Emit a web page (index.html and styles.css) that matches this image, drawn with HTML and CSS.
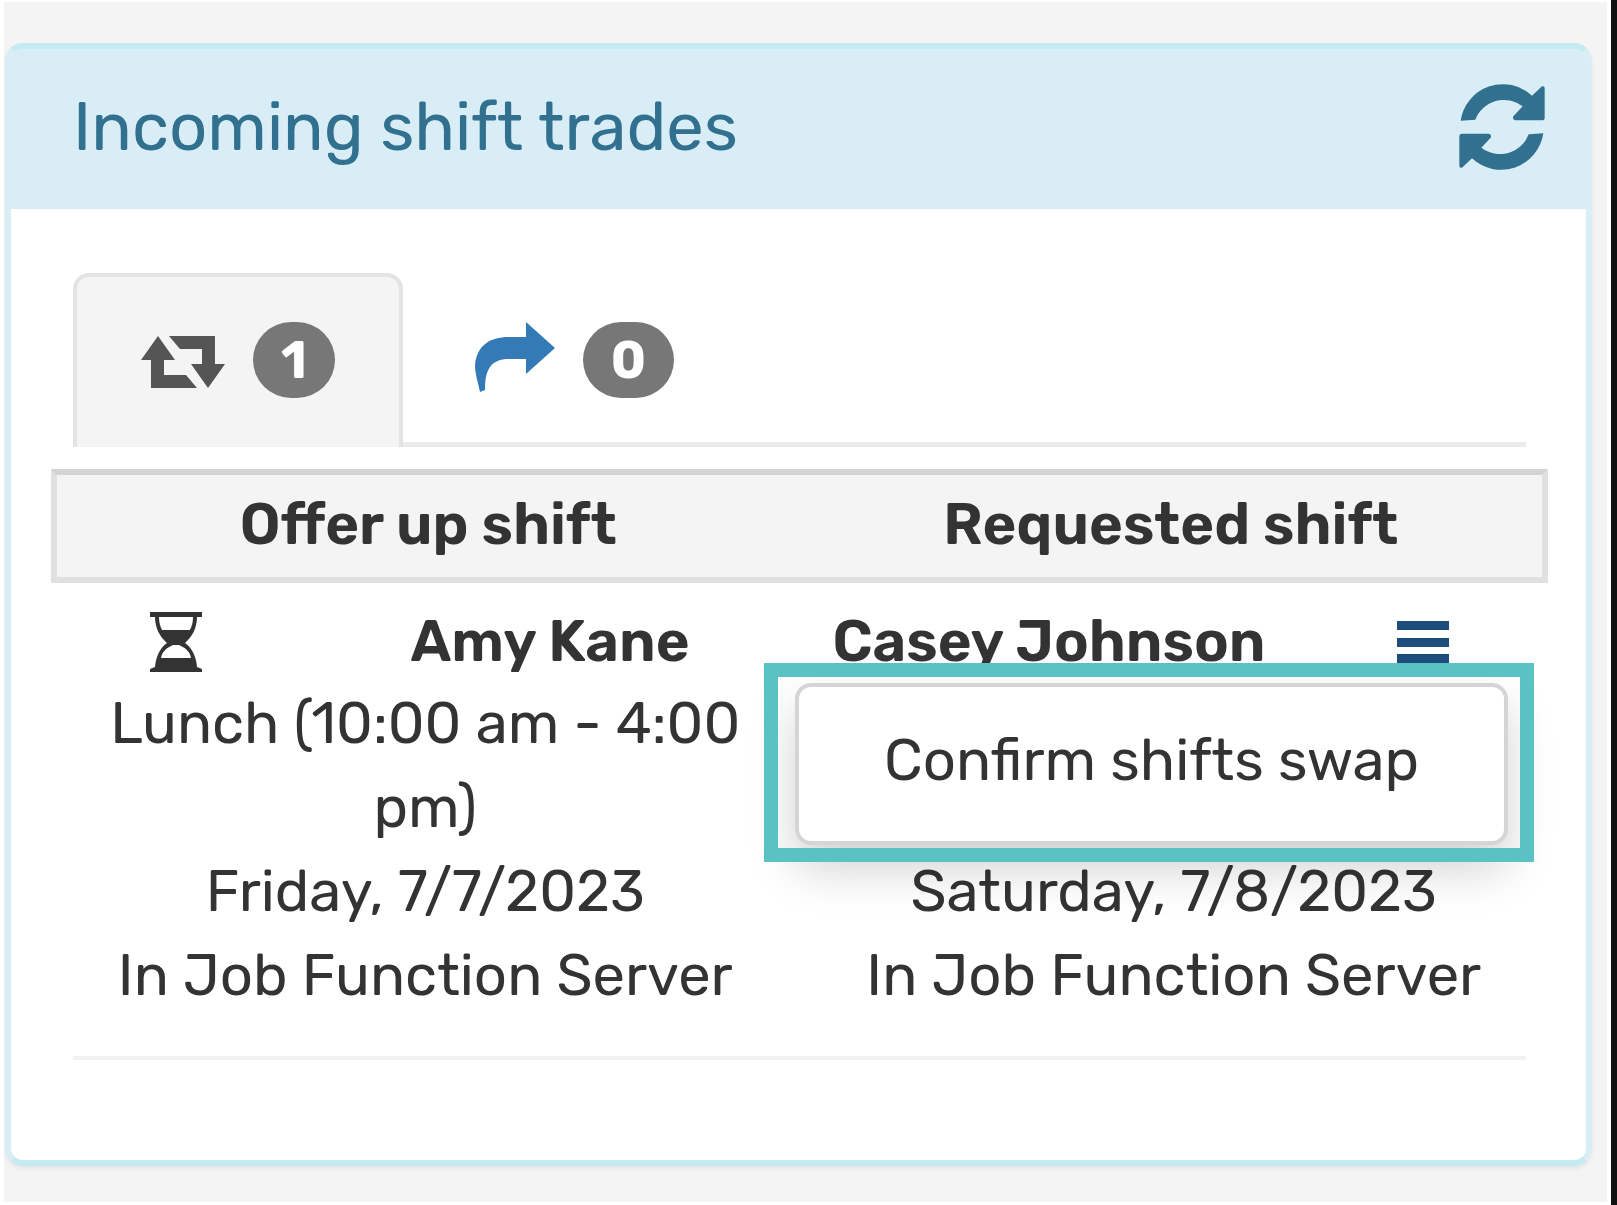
FILE: index.html
```html
<!DOCTYPE html>
<html lang="en">
<head>
  <meta charset="UTF-8" />
  <meta name="viewport" content="width=device-width, initial-scale=1" />
  <title>Incoming shift trades</title>
  <link rel="stylesheet" href="styles.css">
</head>
<body>
  <main>
    <section class="panel">
      <header class="panel-heading">
        <h1>Incoming shift trades</h1>
        <button type="button" class="icon-button refresh" aria-label="Refresh">
          <svg width="88" height="88" viewBox="0 0 264 264" fill="currentColor">
            <path d="M8 113A128 128 0 0 1 222 38L252 10Q260 8 260 16V104Q260 112 252 112H172Q162 110 166 100L194 70A92 92 0 0 0 52 110Z" />
            <path transform="rotate(180 132 132)" d="M8 113A128 128 0 0 1 222 38L252 10Q260 8 260 16V104Q260 112 252 112H172Q162 110 166 100L194 70A92 92 0 0 0 52 110Z" />
          </svg>
        </button>
      </header>

      <div class="panel-body">
        <nav class="tabs">
          <a href="#swaps" class="tab active" aria-label="Swaps">
            <svg width="84" height="56" viewBox="0 -4 84 56" fill="currentColor">
              <path d="M17 0L34 24H23V39H45L56 52H10V24H0Z" />
              <path d="M67 52L50 28H61V13H39L28 0H74V28H84Z" />
            </svg>
            <span class="badge">1</span>
          </a>
          <a href="#offers" class="tab" aria-label="Offers">
            <svg width="80" height="76" viewBox="0 0 80 76" fill="currentColor">
              <path d="M51 0L80 26L51 52V37H34C16 37 10 47 10 68L5 70C3 60 0 52 0 43C2 24 14 15 34 15H51Z" />
            </svg>
            <span class="badge">0</span>
          </a>
        </nav>

        <div class="columns-head">
          <h2>Offer up shift</h2>
          <h2>Requested shift</h2>
        </div>

        <div class="trade">
          <div class="people">
            <svg width="52" height="60" viewBox="0 0 52 60" fill="currentColor">
              <path d="M0 0H52V5H47C47 16 42 25 35 31C42 36 46 44 47 55L52 57V60H0V57L5 55C6 44 10 36 17 31C10 25 5 16 5 5H0ZM9 5C9 10 10 14 12 18H40C42 14 43 10 43 5ZM23 33C16 36 12 40 11 46H41C40 40 36 36 29 33Z" fill-rule="evenodd" />
            </svg>
            <strong>Amy Kane</strong>
            <strong>Casey Johnson</strong>
            <button type="button" class="icon-button menu" aria-label="Actions">
              <svg width="52" height="42" viewBox="0 0 52 42" fill="currentColor">
                <path d="M0 0H52V9H0ZM0 17H52V26H0ZM0 33H52V42H0Z" />
              </svg>
            </button>
          </div>
          <div class="shifts">
            <div class="shift">
              <p>Lunch (10:00 am - 4:00 pm)</p>
              <p>Friday, 7/7/2023</p>
              <p>In Job Function Server</p>
            </div>
            <div class="shift">
              <p>Saturday, 7/8/2023</p>
              <p>In Job Function Server</p>
            </div>
          </div>
          <div class="highlight">
            <div class="dropdown">
              <button type="button">Confirm shifts swap</button>
            </div>
          </div>
        </div>
      </div>
    </section>
  </main>
</body>
</html>
```
FILE: styles.css
```css
* {
  box-sizing: border-box;
}
body {
  margin: 0;
  min-height: 100vh;
  padding: 2px 4px 3px;
  border-right: 6px solid #111;
  background: #fff;
  color: #333;
  font-family: Rubik, Roboto, sans-serif;
  font-size: 58px;
  line-height: 84px;
}
main {
  min-height: calc(100vh - 5px);
  padding: 41px 15px 36px 1px;
  background: #f4f4f4;
}
h1, h2, p {
  margin: 0;
}
.panel {
  border: 6px solid #c4eaf2;
  border-left-color: #d8eef4;
  border-right-color: #d8eef4;
  border-radius: 18px;
  background: #fff;
  box-shadow: 0 3px 4px rgba(0,0,0,0.06);
}
.panel-heading {
  display: flex;
  justify-content: space-between;
  align-items: center;
  height: 160px;
  padding: 0 40px 4px 62px;
  border-radius: 12px 12px 0 0;
  background: #d9edf7;
  color: #31708f;
}
h1 {
  font-size: 67px;
  font-weight: 400;
}
.icon-button {
  display: flex;
  padding: 0;
  border: none;
  background: none;
  color: inherit;
  cursor: pointer;
}
.panel-body {
  padding: 64px 38px 100px 40px;
}
.tabs {
  display: flex;
  gap: 4px;
  margin: 0 22px 22px;
  border-bottom: 5px solid #ebebeb;
}
.tab {
  display: flex;
  align-items: center;
  gap: 28px;
  height: 174px;
  margin-bottom: -5px;
  padding: 0 64px 4px;
  border: 4px solid transparent;
  border-bottom: none;
  border-radius: 16px 16px 0 0;
  color: #337ab7;
  text-decoration: none;
}
.tab.active {
  border-color: #e3e3e3;
  background: #f4f4f4;
  color: #555;
}
.badge {
  padding: 0 28px;
  border-radius: 38px;
  background: #777;
  color: #fff;
  font-size: 52px;
  font-weight: 700;
  line-height: 76px;
}
.columns-head {
  display: grid;
  grid-template-columns: 1fr 1fr;
  padding: 10px 0 12px;
  border: 6px solid #e0e0e0;
  border-top-color: #d3d3d3;
  background: #f4f4f4;
  text-align: center;
}
h2, strong {
  font-size: 58px;
  font-weight: 600;
  line-height: 80px;
}
.trade {
  position: relative;
  padding: 19px 0 42px;
  text-align: center;
}
.trade::after {
  content: "";
  position: absolute;
  right: 22px;
  bottom: 0;
  left: 22px;
  border-bottom: 4px solid #f2f2f2;
}
.people {
  display: grid;
  grid-template-columns: 1fr 2fr 2fr 1fr;
  align-items: center;
  justify-items: center;
  white-space: nowrap;
}
.menu {
  color: #1d4d7c;
}
.shifts {
  display: grid;
  grid-template-columns: 1fr 1fr;
  align-items: end;
}
.shift {
  padding: 0 40px;
}
.highlight {
  position: absolute;
  top: 80px;
  right: 14px;
  padding: 20px 26px 17px 31px;
}
/* frame sits above the dropdown shadow */
.highlight::after {
  content: "";
  position: absolute;
  inset: 0;
  border: 14px solid #5bc2c4;
  pointer-events: none;
}
.dropdown {
  padding: 32px 85px 38px;
  border: 4px solid #d5d5d5;
  border-radius: 16px;
  background: #fff;
  box-shadow: 0 24px 48px rgba(0,0,0,0.18);
}
.dropdown button {
  padding: 0;
  border: none;
  background: none;
  color: inherit;
  font: inherit;
  cursor: pointer;
}
```
